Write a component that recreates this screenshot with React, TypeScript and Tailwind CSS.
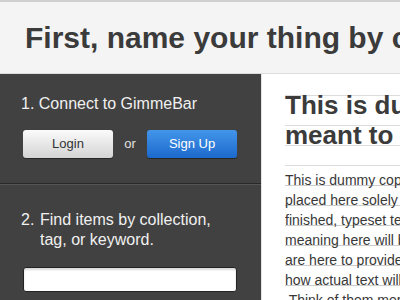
const bodyLines = [
  'This is dummy copy. It is not meant to be read. It has been',
  'placed here solely to demonstrate the look and feel of',
  'finished, typeset text. Only for show. He who searches for',
  'meaning here will be sorely disappointed. These words',
  'are here to provide the reader with a basic impression of',
  'how actual text will appear in its final presented form.',
  ' Think of them merely as a stand-in for real words.',
];

const App = () => {
  return (
    <div className="w-[400px] h-[300px] overflow-hidden bg-white font-['Liberation_Sans',Arial,sans-serif]">
      {/* Header */}
      <div className="h-[74px] bg-[#f4f4f4] border-t-2 border-t-[#cfcfcf] border-b border-b-[#dcdcdc] pl-[25px] pt-[21px]">
        <h1 className="text-[30px] leading-[30px] font-bold text-[#3b3b3b] whitespace-nowrap">
          First, name your thing by choosing a title
        </h1>
      </div>

      <div className="flex h-[226px]">
        {/* Left panel */}
        <div className="w-[261px] shrink-0 bg-[#414141] text-[#f0f0f0]">
          <div className="pt-5 pl-[21px] pb-[25px] border-b border-b-[#282828]">
            <p className="text-[16px] leading-5">1. Connect to GimmeBar</p>
            <div className="flex items-center mt-4 pl-[2px]">
              <button className="w-[90px] h-7 rounded-[3px] bg-gradient-to-b from-[#fbfbfb] to-[#d4d4d4] text-[#333] text-[13px] shadow-[0_1px_0_rgba(0,0,0,0.4)]">
                Login
              </button>
              <span className="w-[34px] text-center text-[13px] text-[#e2e2e2]">or</span>
              <button className="w-[90px] h-7 rounded-[3px] bg-gradient-to-b from-[#4396ea] to-[#1c68cc] text-white text-[13px] shadow-[0_1px_0_rgba(0,0,0,0.4)]">
                Sign Up
              </button>
            </div>
          </div>
          <div className="border-t border-t-[#555] pt-[25px] pl-[21px]">
            <div className="flex text-[16px] leading-5">
              <span className="w-[19px] shrink-0">2.</span>
              <span className="w-[190px]">Find items by collection, tag, or keyword.</span>
            </div>
            <div className="mt-[17px] ml-[2px] w-[214px] h-[25px] rounded-[3px] bg-white border border-[#222] shadow-[inset_0_2px_2px_rgba(0,0,0,0.15)]" />
          </div>
        </div>

        {/* Right content */}
        <div className="flex-1 border-l border-l-[#e4e4e4] pl-[23px] pt-[21px] overflow-hidden">
          <div className="border-t border-t-[#dcdcdc] text-[#3b3b3b] font-bold text-[26px] leading-[18px] whitespace-nowrap">
            <div className="h-[30px] border-b border-b-[#dcdcdc]">This is dummy text</div>
            <div className="h-5 border-b border-b-[#dcdcdc]">meant to</div>
            <div className="h-5 border-b border-b-[#dcdcdc]" />
          </div>
          <div className="text-[14px] text-[#383838] leading-[28px] whitespace-pre">
            {bodyLines.map((line, i) => (
              <div key={i} className="h-5 border-b border-b-[#cccccc]">
                {line}
              </div>
            ))}
          </div>
        </div>
      </div>
    </div>
  );
};

export default App;
